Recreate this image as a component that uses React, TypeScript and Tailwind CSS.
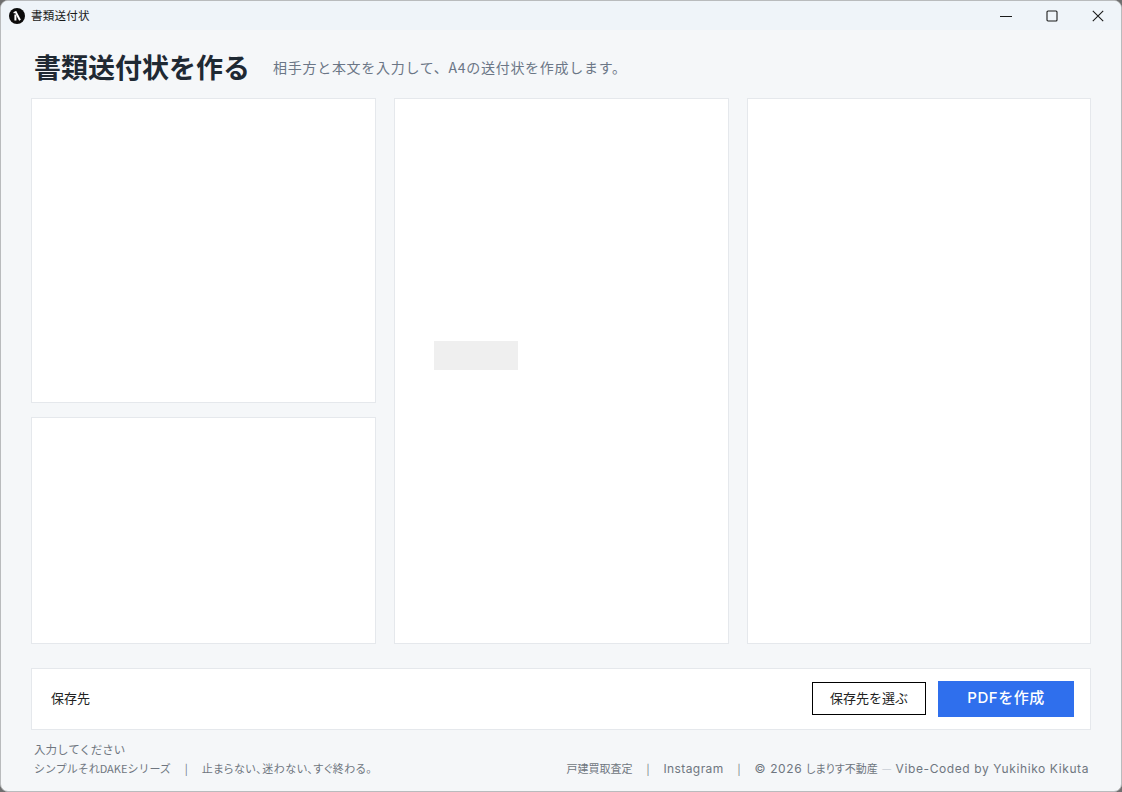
const jp = "font-['Noto_Sans_CJK_JP','Noto_Sans',sans-serif]";
const latin = "font-['Inter','Noto_Sans_CJK_JP',sans-serif]";

function Card({ className = "", children }: { className?: string; children?: React.ReactNode }) {
  return <div className={`border border-[#e5e8ec] bg-white ${className}`}>{children}</div>;
}

function Logo() {
  return (
    <svg width="16" height="16" viewBox="0 0 16 16">
      <circle cx="8" cy="8" r="8" fill="#0b0b0b" />
      <path d="M6.4 3.4 L11 12.2" stroke="#fff" strokeWidth="2" fill="none" />
      <path d="M6.4 6.4 L6.4 12.6" stroke="#fff" strokeWidth="2" fill="none" />
      <path d="M4.6 4.8 L7 3.8" stroke="#fff" strokeWidth="1.4" fill="none" />
    </svg>
  );
}

function WindowButton({ children }: { children: React.ReactNode }) {
  return (
    <div className="flex h-[29px] w-[46px] items-center justify-center">
      <svg width="12" height="12" viewBox="0 0 12 12" fill="none" stroke="#1a1a1a" strokeWidth="1.1">
        {children}
      </svg>
    </div>
  );
}

export default function App() {
  return (
    <div className={`h-[792px] w-[1122px] overflow-hidden bg-[#6f6f6f] ${jp}`}>
      <div className="flex h-full flex-col overflow-hidden rounded-lg border border-[#b9bbbd] bg-[#f5f7f9]">
        <header className="flex h-[29px] shrink-0 items-center justify-between bg-[#eff4f9]">
          <div className="flex items-center gap-[6px] pl-2">
            <Logo />
            <span className="text-[11.5px] tracking-[0.02em] text-[#1a1a1a]">書類送付状</span>
          </div>
          <div className="flex items-center">
            <WindowButton>
              <path d="M0 6.5 H12" />
            </WindowButton>
            <WindowButton>
              <rect x="1" y="1" width="10" height="10" rx="1" />
            </WindowButton>
            <WindowButton>
              <path d="M0.8 0.8 L11.2 11.2 M11.2 0.8 L0.8 11.2" />
            </WindowButton>
          </div>
        </header>

        <main className="flex flex-1 flex-col pl-[30px] pr-[30px]">
          <div className="flex h-[68px] items-center pl-[3px] pt-[4px]">
            <h1 className="text-[27px] font-semibold leading-none text-[#1f2933]">書類送付状を作る</h1>
            <p className="ml-[23px] mt-[2px] text-[14px] leading-none tracking-[0.72px] text-[#6b7686]">
              相手方と本文を入力して、A4の送付状を作成します。
            </p>
          </div>

          <div className="grid h-[546px] grid-cols-[345px_335px_344px] gap-[18px]">
            <div className="flex flex-col gap-[14px]">
              <Card className="h-[305px]" />
              <Card className="h-[227px]" />
            </div>
            <Card className="pl-[39px] pt-[242px]">
              <div className="h-[29px] w-[84px] bg-[#efefef]" />
            </Card>
            <Card />
          </div>

          <Card className="mt-[24px] flex h-[62px] items-center justify-between pl-[19px] pr-4">
            <span className="mb-[3px] text-[13px] text-[#222]">保存先</span>
            <div className="flex items-center gap-3">
              <button type="button" className="mb-[2px] h-[33px] w-[114px] border border-black bg-white pb-[1px] text-[13px] text-[#222]">
                保存先を選ぶ
              </button>
              <button type="button" className={`h-[36px] w-[136px] bg-[#2f6fed] pb-[1px] text-[15px] font-medium tracking-[0.5px] text-white ${latin}`}>
                PDFを作成
              </button>
            </div>
          </Card>

          <div className="mt-[10px] pl-[3px] pr-[2px] text-[#6f7680]">
            <div className="text-[11.5px] leading-[18px]">入力してください</div>
            <div className="mt-[1px] flex items-baseline justify-between text-[11px] leading-[18px]">
              <div className="flex items-baseline">
                <span>シンプルそれDAKEシリーズ</span>
                <span className="mx-[14px]">|</span>
                <span className="tracking-[0.5px] [font-feature-settings:'palt']">止まらない、迷わない、すぐ終わる。</span>
              </div>
              <div className="flex items-baseline">
                <span>戸建買取査定</span>
                <span className="mx-[14px]">|</span>
                <span className={`text-[12px] tracking-[0.4px] ${latin}`}>Instagram</span>
                <span className="mx-[14px]">|</span>
                <span className={`text-[12px] tracking-[0.6px] ${latin}`}>© 2026</span>
                <span className="ml-[4px] [font-feature-settings:'palt']">しまりす不動産</span>
                <span className="mx-[4px] text-[#c9ced6]">—</span>
                <span className={`text-[12px] tracking-[0.6px] ${latin}`}>Vibe-Coded by Yukihiko Kikuta</span>
              </div>
            </div>
          </div>
        </main>
      </div>
    </div>
  );
}
